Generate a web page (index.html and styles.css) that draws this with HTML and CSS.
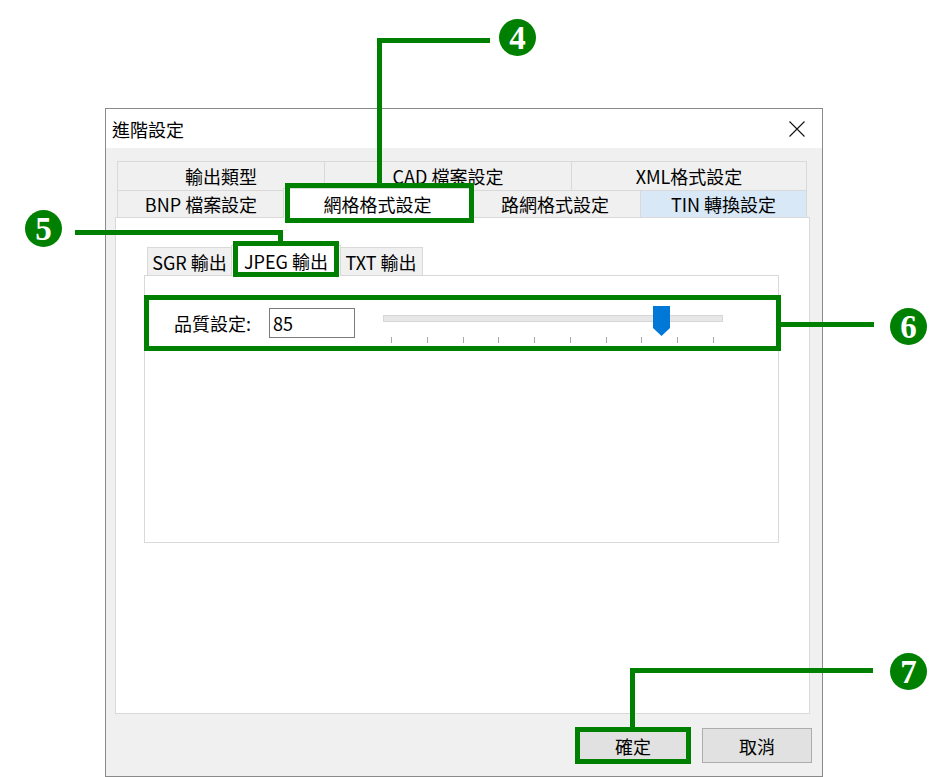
FILE: index.html
```html
<!DOCTYPE html>
<html lang="zh-Hant">
<head>
<meta charset="utf-8">
<title>進階設定</title>
<link rel="stylesheet" href="styles.css">
</head>
<body>
<div class="dialog">
  <div class="titlebar">
    <span class="title">進階設定</span>
    <svg class="close" width="16" height="16" viewBox="0 0 16 16"><path d="M0.5 0.5 L15.5 15.5 M15.5 0.5 L0.5 15.5" stroke="#111" stroke-width="1.1" fill="none"/></svg>
  </div>
  <div class="body">
    <div class="tabs">
      <div class="tabrow row1">
        <div class="tab w208">輸出類型</div>
        <div class="tab w247">CAD 檔案設定</div>
        <div class="tab w235">XML格式設定</div>
      </div>
      <div class="tabrow row2">
        <div class="tab w168">BNP 檔案設定</div>
        <div class="tab w185 selected">網格格式設定</div>
        <div class="tab w171">路網格式設定</div>
        <div class="tab w166 hover">TIN 轉換設定</div>
      </div>
      <div class="panel">
        <div class="subtabs">
          <div class="subtab s85">SGR 輸出</div>
          <div class="subtab s108 selected">JPEG 輸出</div>
          <div class="subtab s83">TXT 輸出</div>
        </div>
        <div class="subpanel">
          <div class="quality-row">
            <span class="label">品質設定:</span>
            <div class="textbox">85</div>
            <div class="slider">
              <div class="track"></div>
              <div class="ticks">
                <i></i><i></i><i></i><i></i><i></i><i></i><i></i><i></i><i></i><i></i>
              </div>
              <svg class="thumb" width="17" height="30" viewBox="0 0 17 30"><polygon points="0,0 17,0 17,22 8.5,30 0,22" fill="#0078d7"/></svg>
            </div>
          </div>
        </div>
      </div>
    </div>
    <div class="buttons">
      <div class="btn default">確定</div>
      <div class="btn">取消</div>
    </div>
  </div>
</div>

<div class="annot box4"></div>
<div class="annot line4"></div>
<div class="annot num n4">4</div>

<div class="annot box5"></div>
<div class="annot line5"></div>
<div class="annot num n5">5</div>

<div class="annot box6"></div>
<div class="annot line6"></div>
<div class="annot num n6">6</div>

<div class="annot box7"></div>
<div class="annot line7"></div>
<div class="annot num n7">7</div>
</body>
</html>
```
FILE: styles.css
```css
* { box-sizing: border-box; }
html, body { margin: 0; padding: 0; background: #fff; }
body {
  width: 949px;
  height: 777px;
  overflow: hidden;
  font-family: "Noto Sans CJK TC", "Noto Sans", sans-serif;
  font-size: 18px;
  color: #000;
}

.dialog {
  margin: 108px 0 0 105px;
  width: 718px;
  height: 669px;
  border: 1px solid #8a8a8a;
  display: flex;
  flex-direction: column;
}

.titlebar {
  height: 39px;
  background: #fff;
  display: flex;
  align-items: center;
  justify-content: space-between;
  padding: 0 17px 0 6px;
}
.title { line-height: 20px; }
.close { display: block; }

.body {
  flex: 1;
  background: #f0f0f0;
  padding: 13px 0 0 9px;
}

.tabs { width: 695px; }

.tabrow {
  display: flex;
  margin-left: 2px;
  width: 690px;
}
.row1 { height: 29px; }
.row2 { height: 27px; align-items: flex-start; }

.tab {
  height: 100%;
  display: flex;
  align-items: center;
  justify-content: center;
  background: #f0f0f0;
  border: 1px solid #d9d9d9;
  border-bottom: none;
  line-height: 20px;
  white-space: nowrap;
}
.tab + .tab { border-left: none; }
.w208 { width: 208px; }
.w247 { width: 247px; }
.w235 { width: 235px; }
.w168 { width: 168px; }
.w185 { width: 185px; }
.w171 { width: 171px; }
.w166 { width: 166px; }

.tab.hover { background: #d8e8f6; }
.tab.selected {
  position: relative;
  z-index: 2;
  width: 189px;
  height: 30px;
  margin: -2px -2px 0;
  background: #fff;
  border-left: 1px solid #d9d9d9;
  padding-top: 1px;
}

.panel {
  height: 497px;
  background: #fff;
  border: 1px solid #d9d9d9;
  padding: 29px 0 0 28px;
}

.subtabs {
  display: flex;
  align-items: flex-start;
  height: 28px;
  margin-left: 3px;
}
.subtab {
  height: 28px;
  display: flex;
  align-items: center;
  justify-content: center;
  background: #f0f0f0;
  border: 1px solid #d9d9d9;
  border-bottom: none;
  line-height: 20px;
  white-space: nowrap;
}
.subtab + .subtab { border-left: none; }
.s85 { width: 85px; }
.s108 { width: 108px; }
.s83 { width: 83px; }
.subtab.selected {
  position: relative;
  z-index: 2;
  width: 110px;
  height: 31px;
  margin: -2px -1px 0;
  background: #fff;
  border-left: 1px solid #d9d9d9;
}

.subpanel {
  width: 635px;
  height: 268px;
  background: #fff;
  border: 1px solid #d9d9d9;
}

.quality-row {
  display: flex;
  align-items: flex-start;
  margin-top: 30px;
  padding-left: 29px;
}
.label {
  width: 95px;
  margin-top: 2px;
  line-height: 30px;
  white-space: nowrap;
}
.textbox {
  width: 86px;
  height: 30px;
  margin-top: 2px;
  border: 1px solid #7a7a7a;
  background: #fff;
  padding-left: 3px;
  line-height: 28px;
}
.slider {
  position: relative;
  width: 340px;
  height: 37px;
  margin-left: 28px;
}
.track {
  margin-top: 9px;
  height: 7px;
  background: #e7e7e7;
  border: 1px solid #d6d6d6;
}
.ticks {
  display: flex;
  justify-content: space-between;
  margin-top: 15px;
  padding: 0 9px 0 8px;
  height: 6px;
}
.ticks i {
  display: block;
  width: 1px;
  height: 6px;
  background: #a8a8a8;
}
.thumb {
  position: absolute;
  left: 270px;
  top: 0;
  display: block;
}

.buttons {
  display: flex;
  justify-content: flex-end;
  gap: 14px;
  margin-top: 14px;
  padding-right: 10px;
}
.btn {
  width: 110px;
  height: 35px;
  background: #e1e1e1;
  border: 1px solid #adadad;
  display: flex;
  align-items: center;
  justify-content: center;
  line-height: 20px;
}
.btn.default { border: 1px solid #0078d7; }

/* annotation overlay */
.annot { position: absolute; z-index: 10; }
.box4, .box5, .box6, .box7 { border: 5px solid #008000; }
.box4 { left: 285px; top: 183px; width: 189px; height: 40px; }
.line4 { left: 377px; top: 38px; width: 113px; height: 145px; border-top: 5px solid #008000; border-left: 5px solid #008000; }

.box5 { left: 233px; top: 241px; width: 106px; height: 36px; }
.line5 { left: 75px; top: 230px; width: 208px; height: 11px; border-top: 5px solid #008000; border-right: 5px solid #008000; }

.box6 { left: 144px; top: 295px; width: 637px; height: 56px; }
.line6 { left: 781px; top: 322px; width: 93px; height: 5px; background: #008000; }

.box7 { left: 575px; top: 727px; width: 116px; height: 37px; }
.line7 { left: 630px; top: 668px; width: 243px; height: 59px; border-top: 5px solid #008000; border-left: 5px solid #008000; }

.num {
  width: 37px;
  height: 37px;
  border-radius: 50%;
  background: #008000;
  color: #fff;
  font-family: "Liberation Serif", "DejaVu Serif", serif;
  font-weight: bold;
  font-size: 33px;
  line-height: 38px;
  text-align: center;
}
.n4 { left: 499px; top: 19px; }
.n5 { left: 25px; top: 210px; }
.n6 { left: 890px; top: 308px; }
.n7 { left: 890px; top: 653px; }
```
